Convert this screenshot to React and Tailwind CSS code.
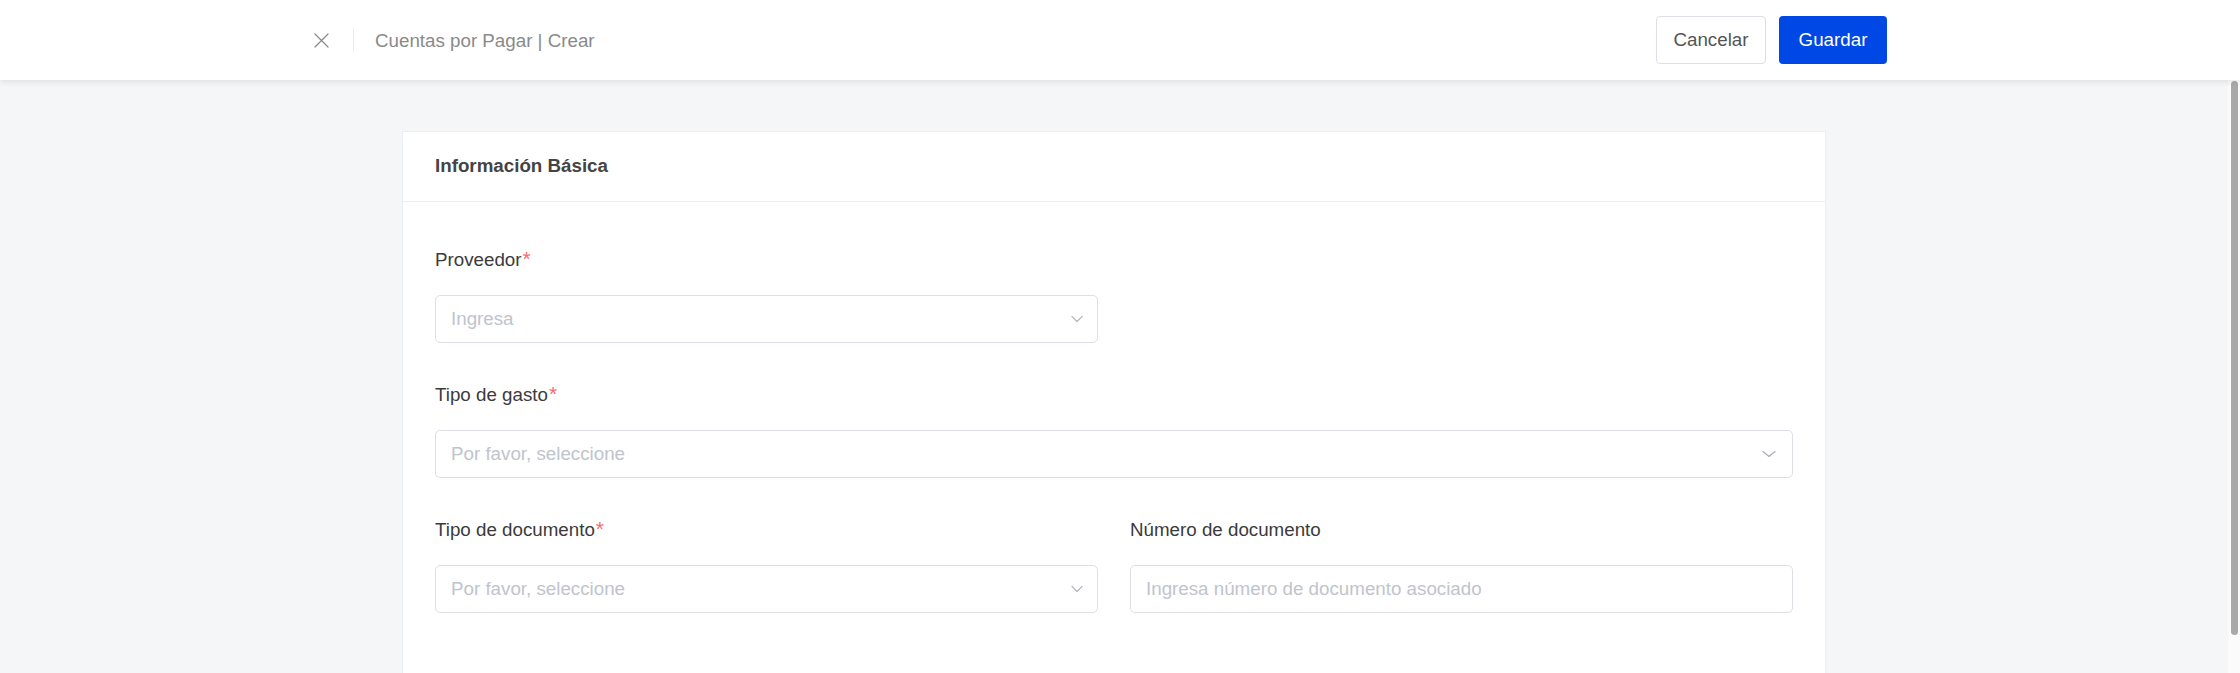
import React from "react";

function Chevron({ big }) {
  return big ? (
    <svg width="14" height="8" viewBox="0 0 14 8" fill="none" className="shrink-0">
      <path d="M1 1.5L7 6.5L13 1.5" stroke="#a8acb4" strokeWidth="1.2" strokeLinecap="round" strokeLinejoin="round" />
    </svg>
  ) : (
    <svg width="12" height="8" viewBox="0 0 12 8" fill="none" className="shrink-0">
      <path d="M1 1.5L6 6.5L11 1.5" stroke="#b4b8c0" strokeWidth="1.2" strokeLinecap="round" strokeLinejoin="round" />
    </svg>
  );
}

function Label({ children, required }) {
  return (
    <div className="mb-[22px] text-[18.75px] leading-[27px] text-[#3b3b3b]">
      {children}
      {required && <span className="ml-[1px] text-[21px] leading-[0] text-[#f56c6c]">*</span>}
    </div>
  );
}

function SelectBox({ placeholder, big }) {
  return (
    <div className={big ? "flex h-[48px] w-full items-center justify-between rounded-[5px] border border-[#dcdfe6] bg-white pl-[15px] pr-[16px]" : "flex h-[48px] w-full items-center justify-between rounded-[5px] border border-[#dcdfe6] bg-white pl-[15px] pr-[14px]"}>
      <span className="text-[18.75px] text-[#c0c4cc]">{placeholder}</span>
      <Chevron big={big} />
    </div>
  );
}

function InputBox({ placeholder }) {
  return (
    <div className="flex h-[48px] w-full items-center rounded-[5px] border border-[#dcdfe6] bg-white px-[15px]">
      <span className="text-[18.75px] text-[#c0c4cc]">{placeholder}</span>
    </div>
  );
}

export default function App() {
  return (
    <div className="flex h-[673px] w-[2240px] flex-col overflow-hidden bg-white font-['Liberation_Sans',Arial,sans-serif]">
      <header className="relative z-10 flex h-[80px] shrink-0 items-center justify-between bg-white pl-[314px] pr-[353px] shadow-[0_2px_6px_rgba(0,0,0,0.09)]">
        <div className="flex items-center">
          <svg width="15" height="15" viewBox="0 0 15 15" fill="none">
            <path d="M1 1L14 14M14 1L1 14" stroke="#8c8c8c" strokeWidth="1.3" strokeLinecap="round" />
          </svg>
          <div className="ml-[24px] h-[26px] w-px bg-[#ececec]" />
          <div className="ml-[21px] text-[18.75px] leading-[27px] text-[#8a8a8a]">Cuentas por Pagar | Crear</div>
        </div>
        <div className="flex items-center gap-[13px]">
          <button className="flex h-[48px] w-[110px] items-center justify-center rounded-[4px] border border-[#dcdfe6] bg-white text-[18.75px] text-[#555555]">
            Cancelar
          </button>
          <button className="flex h-[48px] w-[108px] items-center justify-center rounded-[4px] bg-[#0048e5] text-[18.75px] text-white">
            Guardar
          </button>
        </div>
      </header>

      <div className="flex min-h-0 flex-1">
        <main className="min-w-0 flex-1 overflow-hidden bg-[#f5f6f8]">
          <div className="mx-auto mt-[51px] w-[1424px] border border-[#ebeef5] bg-white">
            <div className="border-b border-[#ebeef5] px-[32px] pb-[22px] pt-[20px] text-[18.75px] font-bold leading-[27px] text-[#444444]">
              Información Básica
            </div>
            <div className="px-[32px] pb-[80px] pt-[44px]">
              <div className="mb-[38px] grid grid-cols-2 gap-x-[32px]">
                <div>
                  <Label required>Proveedor</Label>
                  <SelectBox placeholder="Ingresa" />
                </div>
              </div>
              <div className="mb-[38px]">
                <Label required>Tipo de gasto</Label>
                <SelectBox placeholder="Por favor, seleccione" big />
              </div>
              <div className="mb-[38px] grid grid-cols-2 gap-x-[32px]">
                <div>
                  <Label required>Tipo de documento</Label>
                  <SelectBox placeholder="Por favor, seleccione" />
                </div>
                <div>
                  <Label>Número de documento</Label>
                  <InputBox placeholder="Ingresa número de documento asociado" />
                </div>
              </div>
            </div>
          </div>
        </main>
        <div className="w-[12px] shrink-0 bg-[#fbfbfb] pl-[3px] pt-[1px]">
          <div className="h-[554px] w-[7px] rounded-[4px] bg-[#a9a9a9]" />
        </div>
      </div>
    </div>
  );
}
